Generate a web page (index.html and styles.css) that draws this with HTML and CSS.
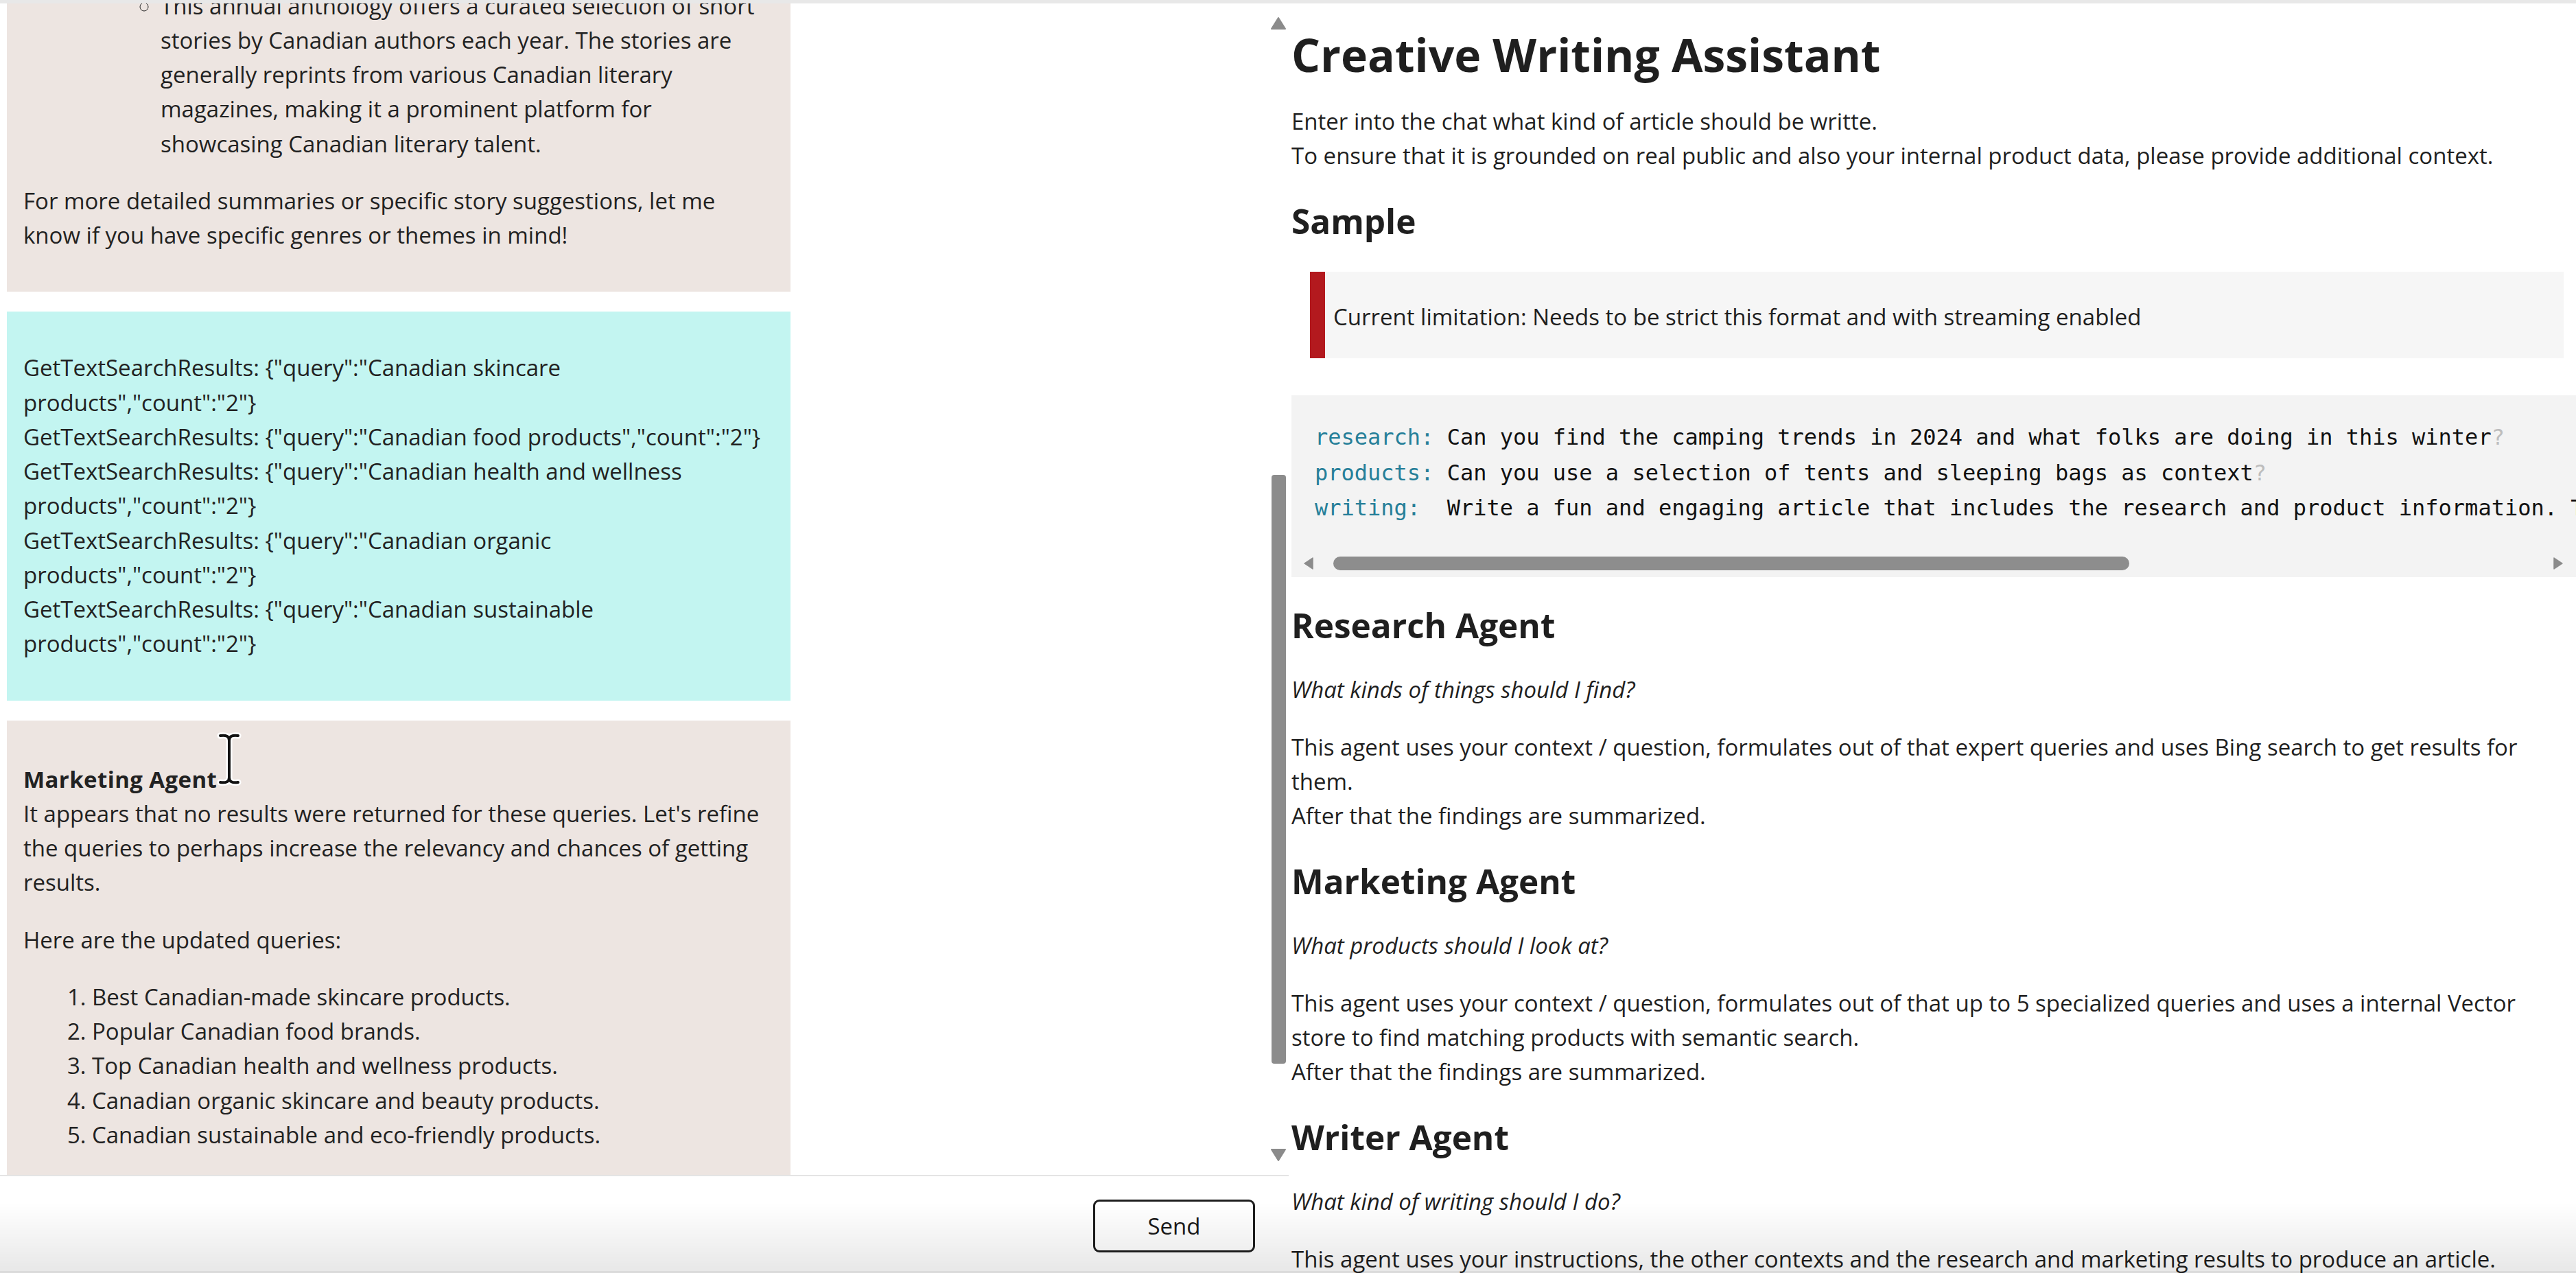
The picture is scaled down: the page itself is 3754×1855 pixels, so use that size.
FILE: index.html
```html
<!DOCTYPE html>
<html lang="en">
<head>
<meta charset="utf-8">
<title>Creative Writing Assistant</title>
<link rel="stylesheet" href="styles.css">
</head>
<body>
<div class="topbar"></div>
<div class="app">
  <section class="chat">
    <div class="chat-body">
      <div class="messages">
        <div class="msg msg-bot">
          <p>Here are a few well-known collections of short stories by Canadian authors:</p>
          <ol start="3">
            <li><strong>"Best Canadian Stories"</strong>
              <ul>
                <li>This annual anthology offers a curated selection of short stories by Canadian authors each year. The stories are generally reprints from various Canadian literary magazines, making it a prominent platform for showcasing Canadian literary talent.</li>
              </ul>
            </li>
          </ol>
          <p>For more detailed summaries or specific story suggestions, let me know if you have specific genres or themes in mind!</p>
        </div>
        <div class="msg msg-tool">
          <p>GetTextSearchResults: {"query":"Canadian skincare products","count":"2"}<br>GetTextSearchResults: {"query":"Canadian food products","count":"2"}<br>GetTextSearchResults: {"query":"Canadian health and wellness products","count":"2"}<br>GetTextSearchResults: {"query":"Canadian organic products","count":"2"}<br>GetTextSearchResults: {"query":"Canadian sustainable products","count":"2"}</p>
        </div>
        <div class="msg msg-bot msg-current">
          <p><strong>Marketing Agent</strong><br>It appears that no results were returned for these queries. Let's refine the queries to perhaps increase the relevancy and chances of getting results.</p>
          <p>Here are the updated queries:</p>
          <ol>
            <li>Best Canadian-made skincare products.</li>
            <li>Popular Canadian food brands.</li>
            <li>Top Canadian health and wellness products.</li>
            <li>Canadian organic skincare and beauty products.</li>
            <li>Canadian sustainable and eco-friendly products.</li>
          </ol>
          <svg class="ibeam" width="36" height="80" viewBox="0 0 36 80" aria-hidden="true">
            <path d="M5 6 Q18 4 18 13 Q18 4 31 6 M18 13 V67 M5 74 Q18 76 18 67 Q18 76 31 74" fill="none" stroke="#fff" stroke-width="9" stroke-linecap="round"/>
            <path d="M5 6 Q18 4 18 13 Q18 4 31 6 M18 13 V67 M5 74 Q18 76 18 67 Q18 76 31 74" fill="none" stroke="#111" stroke-width="4" stroke-linecap="round"/>
          </svg>
        </div>
      </div>
      <div class="vscroll" aria-hidden="true">
        <svg class="vscroll-arrow" width="22" height="18" viewBox="0 0 22 18"><path d="M11 1 L21 17 H1 Z" fill="#8b8b8b" stroke="#8b8b8b" stroke-linejoin="round" stroke-width="2"/></svg>
        <span class="vscroll-thumb"></span>
        <svg class="vscroll-arrow vscroll-down" width="22" height="18" viewBox="0 0 22 18"><path d="M1 1 H21 L11 17 Z" fill="#8b8b8b" stroke="#8b8b8b" stroke-linejoin="round" stroke-width="2"/></svg>
      </div>
    </div>
    <div class="composer">
      <input class="composer-input" type="text" aria-label="Message">
      <button class="send" type="button">Send</button>
    </div>
  </section>

  <main class="info">
    <h1>Creative Writing Assistant</h1>
    <p>Enter into the chat what kind of article should be writte.<br>To ensure that it is grounded on real public and also your internal product data, please provide additional context.</p>
    <h2>Sample</h2>
    <blockquote class="note">Current limitation: Needs to be strict this format and with streaming enabled</blockquote>
    <div class="code">
      <pre><span class="k">research:</span> Can you find the camping trends in 2024 and what folks are doing in this winter<span class="q">?</span>
<span class="k">products:</span> Can you use a selection of tents and sleeping bags as context<span class="q">?</span>
<span class="k">writing:</span>  Write a fun and engaging article that includes the research and product information. Try to keep it light.</pre>
      <div class="code-scroll" aria-hidden="true">
        <svg width="14" height="18" viewBox="0 0 14 18"><path d="M1 9 L13 1 V17 Z" fill="#8b8b8b" stroke="#8b8b8b" stroke-linejoin="round" stroke-width="1.5"/></svg>
        <span class="code-thumb"></span>
        <svg class="code-right" width="14" height="18" viewBox="0 0 14 18"><path d="M13 9 L1 1 V17 Z" fill="#8b8b8b" stroke="#8b8b8b" stroke-linejoin="round" stroke-width="1.5"/></svg>
      </div>
    </div>
    <h2>Research Agent</h2>
    <p><em>What kinds of things should I find?</em></p>
    <p>This agent uses your context / question, formulates out of that expert queries and uses Bing search to get results for them.<br>After that the findings are summarized.</p>
    <h2>Marketing Agent</h2>
    <p><em>What products should I look at?</em></p>
    <p>This agent uses your context / question, formulates out of that up to 5 specialized queries and uses a internal Vector store to find matching products with semantic search.<br>After that the findings are summarized.</p>
    <h2>Writer Agent</h2>
    <p><em>What kind of writing should I do?</em></p>
    <p>This agent uses your instructions, the other contexts and the research and marketing results to produce an article.</p>
  </main>
</div>
<div class="screen-fade" aria-hidden="true"></div>
</body>
</html>
```

FILE: styles.css
```css
html, body {
  margin: 0;
  height: 100%;
  overflow: hidden;
}

body {
  font-family: "Open Sans", "Noto Sans", sans-serif;
  font-size: 33px;
  line-height: 50.25px;
  color: #1f1f1f;
  background: #ffffff;
  display: flex;
  flex-direction: column;
}

.topbar {
  height: 5px;
  flex-shrink: 0;
  background: #e8e8e8;
}

.app {
  flex: 1;
  min-height: 0;
  display: flex;
}

/* ---------- chat column ---------- */
.chat {
  width: 1878px;
  flex-shrink: 0;
  display: flex;
  flex-direction: column;
}

.chat-body {
  flex: 1;
  min-height: 0;
  display: flex;
}

.messages {
  flex: 1;
  min-width: 0;
  overflow: hidden;
  display: flex;
  flex-direction: column;
  justify-content: flex-end;
  gap: 29px;
  padding-left: 10px;
}

.msg {
  position: relative;
  flex-shrink: 0;
  width: 1142px;
  box-sizing: border-box;
  padding: 24px 25px 24px 24px;
  color: #222222;
}

/* the newest message is scrolled so its end sits under the composer */
.msg-current {
  padding-top: 28px;
  padding-bottom: 0;
}

.msg-bot {
  background: #ede5e1;
}

.msg-tool {
  background: #c3f5f1;
}

.msg p {
  margin: 33px 0;
}

.msg strong {
  letter-spacing: 0.4px;
}

.msg ol,
.msg ul {
  margin: 33px 0;
  padding-left: 100px;
}

.msg li ul {
  margin: 0;
  list-style-type: circle;
}

.ibeam {
  position: absolute;
  top: 16px;
  left: 306px;
}

.vscroll {
  width: 26px;
  margin-right: 2px;
  box-sizing: border-box;
  padding: 20px 0;
  display: flex;
  flex-direction: column;
  align-items: center;
}

.vscroll-arrow {
  flex-shrink: 0;
}

.vscroll-thumb {
  width: 21px;
  height: 858px;
  margin-top: 649px;
  border-radius: 4px;
  background: #8c8c8c;
}

.vscroll-down {
  margin-top: auto;
}

.composer {
  height: 143px;
  box-sizing: border-box;
  border-top: 2px solid #e4e4e4;
  display: flex;
  align-items: flex-start;
  padding: 34px 49px 0 0;
}

.composer-input {
  flex: 1;
  min-width: 0;
  border: none;
  outline: none;
  background: transparent;
  font: inherit;
}

.send {
  width: 236px;
  height: 77px;
  box-sizing: border-box;
  border: 3px solid #1e1e1e;
  border-radius: 9px;
  background: #ffffff;
  color: #1a1a1a;
  font-family: "Open Sans", "Noto Sans", sans-serif;
  font-size: 33px;
  line-height: 1;
  padding: 0;
}

/* ---------- info column ---------- */
.info {
  flex: 1;
  min-width: 0;
  overflow: hidden;
  padding: 0 14px 0 4px;
  color: #1f1f1f;
}

.info h1 {
  font-size: 66px;
  line-height: 79px;
  font-weight: 700;
  margin: 34.5px 0 32px;
}

.info h2 {
  font-size: 49.5px;
  line-height: 54px;
  font-weight: 700;
  margin: 43px 0 42px;
}

.info p {
  margin: 33px 0;
}

.note {
  margin: 47px 4px 0 27px;
  border-left: 22px solid #b3191e;
  background: #f6f6f6;
  padding: 41px 20px 35px 12px;
}

.code {
  margin: 54px -14px 0 0;
  background: #f3f3f3;
}

.code pre {
  margin: 0;
  padding: 36px 0 34.5px 34px;
  overflow: hidden;
  font-family: "DejaVu Sans Mono", "Liberation Mono", monospace;
  font-size: 32px;
  line-height: 51.5px;
  color: #111111;
}

.code .k {
  color: #267f99;
}

.code .q {
  color: #bdbdbd;
}

.code-scroll {
  height: 40px;
  display: flex;
  align-items: center;
  padding: 0 19px 0 18px;
}

.code-thumb {
  width: 1160px;
  height: 20px;
  margin-left: 29px;
  border-radius: 10px;
  background: #8d8d8d;
}

.code-right {
  margin-left: auto;
}

.screen-fade {
  position: fixed;
  left: 0;
  right: 0;
  bottom: 0;
  height: 100px;
  pointer-events: none;
  background: linear-gradient(rgba(0, 0, 0, 0), rgba(0, 0, 0, 0.09));
  border-bottom: 3px solid rgba(0, 0, 0, 0.14);
}
```
